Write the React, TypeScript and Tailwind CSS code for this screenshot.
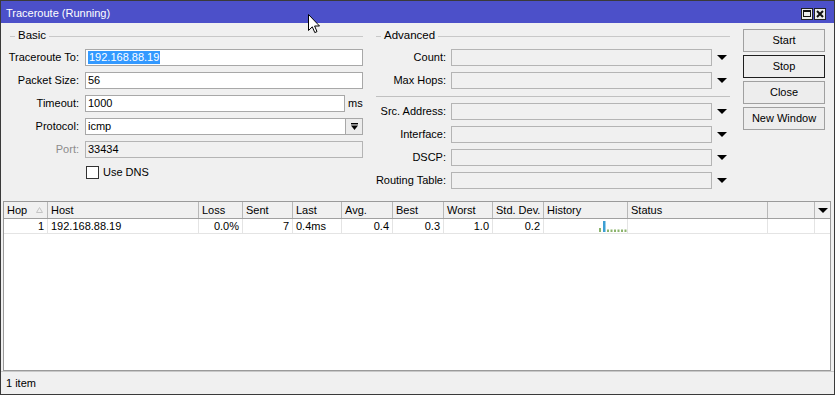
import React from "react";

interface IColumn {
  title: string;
  width: string;
  align: "left" | "right";
}

const columns: IColumn[] = [
  { title: "Hop", width: "w-[44px]", align: "right" },
  { title: "Host", width: "w-[151px]", align: "left" },
  { title: "Loss", width: "w-[44px]", align: "right" },
  { title: "Sent", width: "w-[50px]", align: "right" },
  { title: "Last", width: "w-[49px]", align: "left" },
  { title: "Avg.", width: "w-[51px]", align: "right" },
  { title: "Best", width: "w-[51px]", align: "right" },
  { title: "Worst", width: "w-[49px]", align: "right" },
  { title: "Std. Dev.", width: "w-[51px]", align: "right" },
  { title: "History", width: "w-[84px]", align: "left" },
  { title: "Status", width: "w-[140px]", align: "left" },
  { title: "", width: "w-[47px]", align: "left" },
];

const row = ["1", "192.168.88.19", "0.0%", "7", "0.4ms", "0.4", "0.3", "1.0", "0.2", "", "", ""];

const DownArrow: React.FC<object> = () => (
  <svg width="10" height="5" viewBox="0 0 10 5">
    <path d="M0 0H10L5 5Z" fill="#000" />
  </svg>
);

const Legend: React.FC<{ title: string }> = ({ title }) => (
  <div className="h-[17px] flex items-center pt-[1px]">
    <div className="w-[5px] ml-[2px] border-t border-[#c8c8c8]" />
    <span className="px-[3px] text-[11.5px]">{title}</span>
    <div className="flex-1 border-t border-[#c8c8c8]" />
  </div>
);

const Label: React.FC<{ text: string; width: string; muted?: boolean }> = ({ text, width, muted }) => (
  <div className={`${width} shrink-0 text-right pr-[1px] ${muted ? "text-[#8c8c8c]" : "text-black"}`}>{text}</div>
);

const Box: React.FC<{ children?: React.ReactNode; className?: string }> = ({ children, className }) => (
  <div className={`h-[17px] border flex items-center px-[2px] whitespace-nowrap ${className ?? ""}`}>{children}</div>
);

const AdvancedRow: React.FC<{ label: string }> = ({ label }) => (
  <div className="flex items-center h-[17px]">
    <Label text={label} width="w-[73px]" />
    <Box className="ml-[4px] w-[261px] bg-[#f0f0f0] border-[#b4b4b4]" />
    <div className="flex-1 flex justify-center pl-[1px]">
      <DownArrow />
    </div>
  </div>
);

const History: React.FC<object> = () => (
  <svg width="84" height="14" viewBox="0 0 84 14">
    <rect x="55" y="9" width="2" height="4" fill="#8cb46c" />
    <rect x="59" y="2" width="2.5" height="11" fill="#3d9fd3" />
    <rect x="63" y="10.5" width="2" height="2.5" fill="#8cb46c" />
    <rect x="66.5" y="10.5" width="2" height="2.5" fill="#8cb46c" />
    <rect x="70" y="10.5" width="2" height="2.5" fill="#8cb46c" />
    <rect x="73.5" y="10.5" width="2" height="2.5" fill="#8cb46c" />
    <rect x="77" y="10.5" width="2" height="2.5" fill="#8cb46c" />
    <rect x="80.5" y="10.5" width="2" height="2.5" fill="#8cb46c" />
  </svg>
);

const App: React.FC<object> = () => {
  return (
    <div className="relative w-[835px] h-[395px] flex flex-col overflow-hidden bg-[#f0f0f0] border border-[#3a3a3a] text-[11px] text-black font-['Liberation_Sans',Arial,sans-serif]">
      {/* title bar */}
      <div className="h-[22px] shrink-0 bg-[#4c50c9] flex items-center pt-[3px] pl-[5px] pr-[8px] text-white text-[11px]">
        <span className="flex-1">Traceroute (Running)</span>
        <div className="w-[12px] h-[12px] border border-[#222] bg-[#ececec] flex items-center justify-center">
          <div className="w-[8px] h-[7px] border border-[#111] border-t-2" />
        </div>
        <div className="ml-[1px] w-[12px] h-[12px] border border-[#222] bg-[#ececec] flex items-center justify-center">
          <svg width="8" height="8" viewBox="0 0 8 8">
            <path d="M1 1L7 7M7 1L1 7" stroke="#111" strokeWidth="2" />
          </svg>
        </div>
      </div>

      {/* settings */}
      <div className="flex pt-[4px] shrink-0">
        <div className="ml-[7px] w-[355px]">
          <Legend title="Basic" />
          <div className="mt-[5px] flex flex-col gap-[6px]">
            <div className="flex items-center">
              <Label text="Traceroute To:" width="w-[72px]" />
              <Box className="ml-[5px] flex-1 bg-white border-[#a8a8a8]">
                <span className="bg-[#3399ff] text-white px-[1px] leading-[13px]">192.168.88.19</span>
              </Box>
            </div>
            <div className="flex items-center">
              <Label text="Packet Size:" width="w-[72px]" />
              <Box className="ml-[5px] flex-1 bg-white border-[#a8a8a8]">56</Box>
            </div>
            <div className="flex items-center">
              <Label text="Timeout:" width="w-[72px]" />
              <Box className="ml-[5px] w-[260px] bg-white border-[#a8a8a8]">1000</Box>
              <span className="ml-[3px]">ms</span>
            </div>
            <div className="flex items-center">
              <Label text="Protocol:" width="w-[72px]" />
              <Box className="ml-[5px] w-[261px] bg-white border-[#a8a8a8]">icmp</Box>
              <div className="flex-1 h-[17px] border border-l-0 border-[#a8a8a8] bg-[#ececec] flex items-center justify-center">
                <svg width="7" height="7" viewBox="0 0 7 7">
                  <rect x="0" y="0" width="7" height="1.4" fill="#000" />
                  <path d="M0 2.5H7L3.5 7Z" fill="#000" />
                </svg>
              </div>
            </div>
            <div className="flex items-center">
              <Label text="Port:" width="w-[72px]" muted />
              <Box className="ml-[5px] flex-1 bg-[#f0f0f0] border-[#b4b4b4]">33434</Box>
            </div>
            <div className="flex items-center h-[17px] pl-[78px]">
              <div className="w-[13px] h-[13px] border border-[#333] bg-white" />
              <span className="ml-[4px]">Use DNS</span>
            </div>
          </div>
        </div>

        <div className="ml-[11px] w-[356px]">
          <Legend title="Advanced" />
          <div className="mt-[5px] flex flex-col gap-[6px]">
            <AdvancedRow label="Count:" />
            <AdvancedRow label="Max Hops:" />
          </div>
          <div className="mt-[7px] ml-[2px] border-t border-[#c0c0c0]" />
          <div className="mt-[6px] flex flex-col gap-[6px]">
            <AdvancedRow label="Src. Address:" />
            <AdvancedRow label="Interface:" />
            <AdvancedRow label="DSCP:" />
            <AdvancedRow label="Routing Table:" />
          </div>
        </div>

        <div className="ml-[13px] w-[82px] pt-[2px] flex flex-col gap-[3px]">
          <div className="h-[23px] border border-[#a0a0a0] bg-[#ededed] flex items-center justify-center">Start</div>
          <div className="h-[23px] border border-[#1e1e1e] bg-[#ededed] flex items-center justify-center">Stop</div>
          <div className="h-[23px] border border-[#a0a0a0] bg-[#ededed] flex items-center justify-center">Close</div>
          <div className="h-[23px] border border-[#a0a0a0] bg-[#ededed] flex items-center justify-center">New Window</div>
        </div>
      </div>

      {/* table */}
      <div className="mt-[12px] ml-[2px] mr-[3px] flex-1 min-h-0 border border-[#9a9a9a] bg-white flex flex-col">
        <div className="h-[17px] shrink-0 flex bg-[#f0f0f0] border-b border-[#a0a0a0]">
          {columns.map((col, i) => (
            <div key={i} className={`${col.width} shrink-0 h-full border-r border-[#b8b8b8] pl-[3px] flex items-center whitespace-nowrap`}>
              <span className="flex-1">{col.title}</span>
              {i === 0 && (
                <svg width="7" height="6" viewBox="0 0 7 6" className="mr-[4px]">
                  <path d="M3.5 0.5L6.5 5.5H0.5Z" fill="none" stroke="#c4c4c4" />
                </svg>
              )}
            </div>
          ))}
          <div className="flex-1 h-full flex items-center justify-center">
            <DownArrow />
          </div>
        </div>
        <div className="h-[15px] shrink-0 flex border-b border-[#e4e4e4]">
          {columns.map((col, i) => (
            <div
              key={i}
              className={`${col.width} shrink-0 h-full border-r border-[#e4e4e4] px-[3px] flex items-center whitespace-nowrap ${col.align === "right" ? "justify-end" : "justify-start"}`}
            >
              {i === 9 ? <div className="-mx-[3px]"><History /></div> : row[i]}
            </div>
          ))}
        </div>
      </div>

      {/* status bar */}
      <div className="h-[23px] shrink-0 border-t border-[#c8c8c8] flex items-center pl-[5px]">1 item</div>

      {/* mouse pointer */}
      <svg className="absolute left-[307px] top-[13px]" width="13" height="20" viewBox="0 0 13 20">
        <path d="M0.5 0.5V16.5L4.3 12.8L6.8 18.6L9 17.6L6.6 12H11.5Z" fill="#fff" stroke="#000" strokeLinejoin="round" />
      </svg>
    </div>
  );
};

export default App;
